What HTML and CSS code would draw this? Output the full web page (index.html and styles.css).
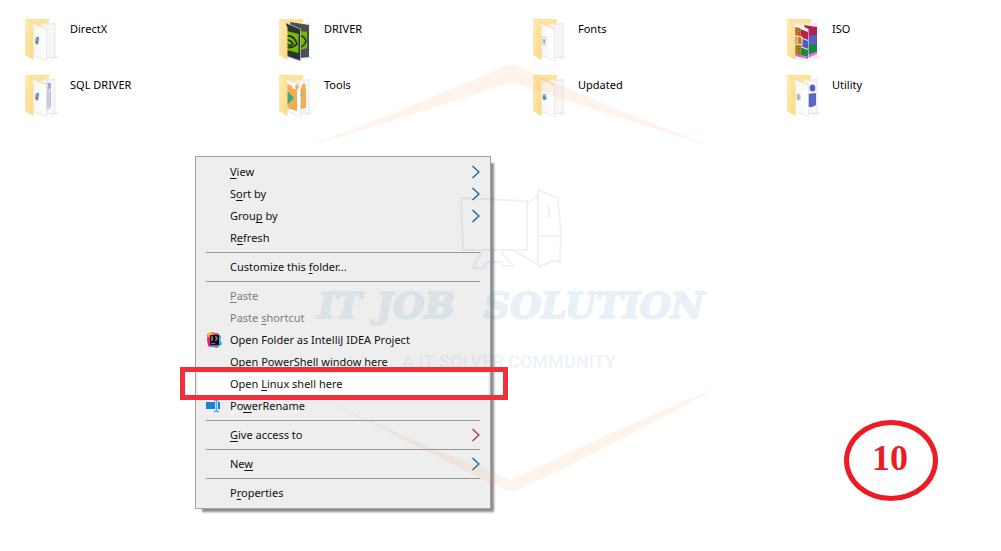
FILE: index.html
```html
<!DOCTYPE html>
<html lang="en">
<head>
<meta charset="utf-8">
<title>Folder context menu</title>
<link rel="stylesheet" href="styles.css">
</head>
<body>
<svg class="defs" aria-hidden="true">
  <defs>
    <linearGradient id="flap" x1="0" y1="0" x2="1" y2="1">
      <stop offset="0" stop-color="#ffecb4"/><stop offset="1" stop-color="#fbd884"/>
    </linearGradient>
    <linearGradient id="sheet" x1="0" y1="0" x2="1" y2="0">
      <stop offset="0" stop-color="#f6f6f6"/><stop offset="1" stop-color="#fefefe"/>
    </linearGradient>
    <linearGradient id="brains" x1="0" y1="0" x2="1" y2="1">
      <stop offset="0" stop-color="#ff9a1f"/><stop offset=".35" stop-color="#f8306d"/><stop offset=".65" stop-color="#1c8df0"/><stop offset="1" stop-color="#ff5f2e"/>
    </linearGradient>
    <g id="back">
      <path d="M31 39l5-1-4 2-9 3z" fill="#e6e6e6"/>
      <path d="M1 1h24v10L9 30z" fill="#fde29a"/>
      <path d="M9 6q10 2 10 0l12-1v34l-9 1z" fill="#f7f7f7"/>
      <path d="M21 7l10-1.500v33.500l-9 1" fill="none" stroke="#dedede" stroke-width=".7"/>
    </g>
    <g id="front">
      <path d="M8 5l14.500 6v31.500L8 37z" fill="url(#sheet)" stroke="#dcdcdc" stroke-width=".6"/>
      <path d="M8 5l12.500 4.500q2 .5 2 2.500" fill="none" stroke="#f6dc98" stroke-width=".9"/>
    </g>
    <path id="cover" d="M1 1l7 6q1.500 1 1.500 3v32L1 37z" fill="url(#flap)"/>
  </defs>
</svg>
<main class="explorer">
  <nav class="files" aria-label="Folders">
    <a class="file" href="#directx">
      <svg class="folder" viewBox="0 0 36 44"><use href="#back"/><use href="#front"/><path d="M11 21l3-2 1 3-1 5-2-1z" fill="#8a9aa5"/><path d="M12 19l3 0v3z" fill="#2f9ae0"/><path d="M11 24l2-1v3z" fill="#4d5d68"/><use href="#cover"/></svg>
      <span>DirectX</span></a>
    <a class="file" href="#driver">
      <svg class="folder" viewBox="0 0 36 44"><use href="#back"/><path d="M12 4l19 3v32l-9 1z" fill="#4b5055"/><path d="M22 13l7 1v16l-7 2z" fill="#76b900"/><path d="M23 18q3 0 5 5-2 5-5 6" fill="none" stroke="#26300f" stroke-width="1.500"/><path d="M8 5l14.500 6v32L8 38z" fill="#2f3336" stroke="#c9cdd0" stroke-width=".7"/><path d="M9 13l11.500 3v19L9 32z" fill="#76b900"/><path d="M9 18q7-1 10 8-5 5-10 3M9 22q4 0 6 4-3 3-6 0" fill="none" stroke="#202b0c" stroke-width="1.700"/><use href="#cover"/></svg>
      <span>DRIVER</span></a>
    <a class="file" href="#fonts">
      <svg class="folder" viewBox="0 0 36 44"><use href="#back"/><use href="#front"/><path d="M10 18l4 1v9l-4-1z" fill="#e8e9eb" stroke="#d0d3d7" stroke-width=".5"/><path d="M11 25l1-4 1 5" fill="none" stroke="#9ab2cb"/><path d="M12 22h1v2h-1z" fill="#d98c8c"/><use href="#cover"/></svg>
      <span>Fonts</span></a>
    <a class="file" href="#iso">
      <svg class="folder" viewBox="0 0 36 44"><use href="#back"/><path d="M18 7l13 2v8l-9 2z" fill="#ad2450"/><path d="M20 18l11-1v9l-9 2z" fill="#5660c4"/><path d="M20 27l11-1v8l-9 3z" fill="#18843d"/><path d="M20 37l11-3v2l-9 4z" fill="#e46fe0"/><path d="M8 5l14.500 6v31.500L8 38z" fill="#f4f4f6"/><path d="M9 9l13 5v8L9 17z" fill="#b9224d"/><path d="M9 18l13 5v8L9 26z" fill="#535bc0"/><path d="M9 27l13 5v7L9 36z" fill="#1b8a45"/><path d="M9 36l13 3v2L9 38z" fill="#ef5be8"/><path d="M10.500 9l4.500 2v27l-4.500-2z" fill="#c77b20"/><path d="M11 18l5 1v8l-5-1z" fill="none" stroke="#f4e3c4" stroke-width="1.200"/><path d="M13 10v8M13 28v9" stroke="#713e12" stroke-dasharray="1 1"/><use href="#cover"/></svg>
      <span>ISO</span></a>
    <a class="file" href="#sql">
      <svg class="folder" viewBox="0 0 36 44"><use href="#back"/><path d="M22 8l5 1v25l-5 3z" fill="#d5d7ea"/><path d="M24 9l3 0v5l-3 2z" fill="#a4a8d8"/><path d="M24 18v16M26.500 17v16" stroke="#b4b6ca"/><use href="#front"/><path d="M11 21l3-2 1 3-1 5-2-1z" fill="#8a9aa5"/><path d="M12 19l3 0v3z" fill="#2f9ae0"/><path d="M11 24l2-1v3z" fill="#4d5d68"/><use href="#cover"/></svg>
      <span>SQL DRIVER</span></a>
    <a class="file" href="#tools">
      <svg class="folder" viewBox="0 0 36 44"><use href="#back"/><path d="M22 14l2-1v-2l2-2 2 2-1 2 1 2v19l-6 1z" fill="#eeae55"/><path d="M22 19l2 2-2 2z" fill="#35a878"/><use href="#front"/><path d="M9 10l5 2 1 3 3 0-1-3 2-2 2 3-2 3v21L9 34z" fill="#f0ad51"/><path d="M9 17l7 7-7 7z" fill="#35ac80"/><use href="#cover"/></svg>
      <span>Tools</span></a>
    <a class="file" href="#updated">
      <svg class="folder" viewBox="0 0 36 44"><use href="#back"/><use href="#front"/><ellipse cx="12.500" cy="23" rx="2" ry="3" fill="#4f8fd0"/><path d="M11 22l2-1 1 2" fill="none" stroke="#b9dcf5" stroke-width=".8"/><use href="#cover"/></svg>
      <span>Updated</span></a>
    <a class="file" href="#utility">
      <svg class="folder" viewBox="0 0 36 44"><use href="#back"/><ellipse cx="26.500" cy="14" rx="2.800" ry="3.500" fill="#5660c4"/><path d="M22 20l7-1q1 0 1 1v11l-4 2-4 0z" fill="#5b64c8"/><use href="#front"/><ellipse cx="12.500" cy="23" rx="2.200" ry="3.500" fill="#c3cfcf"/><path d="M12 21l1 2-1 3" fill="none" stroke="#6fa98d"/><use href="#cover"/></svg>
      <span>Utility</span></a>
  </nav>

  <ul class="menu">
    <li><button class="item"><span><u>V</u>iew</span><svg class="arrow" viewBox="0 0 8 14"><path d="M.5 1l6.500 6-6.500 6"/></svg></button></li>
    <li><button class="item"><span>S<u>o</u>rt by</span><svg class="arrow" viewBox="0 0 8 14"><path d="M.5 1l6.500 6-6.500 6"/></svg></button></li>
    <li><button class="item"><span>Grou<u>p</u> by</span><svg class="arrow" viewBox="0 0 8 14"><path d="M.5 1l6.500 6-6.500 6"/></svg></button></li>
    <li><button class="item"><span>R<u>e</u>fresh</span></button></li>
    <li class="rule"></li>
    <li><button class="item"><span>Customize this <u>f</u>older...</span></button></li>
    <li class="rule"></li>
    <li><button class="item" disabled><span><u>P</u>aste</span></button></li>
    <li><button class="item" disabled><span>Paste <u>s</u>hortcut</span></button></li>
    <li><button class="item"><svg class="glyph" viewBox="0 0 16 16"><path d="M1 2l5-2 3 1 3 0 3 4-1 3 2 4-5 4-4-1-5-1 1-4-2-3z" fill="url(#brains)"/><path d="M1 2l5-2 1 3-4 2z" fill="#ffb431"/><path d="M11 1l4 4-1 3 2 4-3 2z" fill="#18b5ee"/><path d="M1 7l3-2 2 10-4-1z" fill="#e81f83"/><path d="M4 3h9v10H4z" fill="#170a12"/><path d="M5 5h2M6 5v3M5 8h2M9 5h2v2.500L10 8H9" fill="none" stroke="#ccc" stroke-width=".8"/><path d="M5 11.500h4" stroke="#998e96" stroke-width=".8"/></svg><span>Open Folder as IntelliJ IDEA Project</span></button></li>
    <li><button class="item"><span>Open PowerShell window here</span></button></li>
    <li><button class="item active"><span>Open <u>L</u>inux shell here</span></button></li>
    <li><button class="item"><svg class="glyph" viewBox="0 0 16 16"><path d="M0 4h9v7H0zM12 4h2v7h-2z" fill="#1683d8"/><path d="M8 2h5M8 13.500h5M10.500 2v11" stroke="#42b4ee" stroke-width="1.500"/></svg><span>Po<u>w</u>erRename</span></button></li>
    <li class="rule"></li>
    <li><button class="item"><span><u>G</u>ive access to</span><svg class="arrow warm" viewBox="0 0 8 14"><path d="M.5 1l6.500 6-6.500 6"/></svg></button></li>
    <li class="rule"></li>
    <li><button class="item"><span>Ne<u>w</u></span><svg class="arrow" viewBox="0 0 8 14"><path d="M.5 1l6.500 6-6.500 6"/></svg></button></li>
    <li class="rule"></li>
    <li><button class="item"><span>P<u>r</u>operties</span></button></li>
  </ul>

  <svg class="watermark" viewBox="300 60 420 440" role="img" aria-label="IT Job Solution, a IT solver community">
    <g class="roof">
      <path d="M306 147Q400 112 503 67q8-4 17 0 98 45 198 81-110-33-206-66-96 32-206 65z"/>
      <path d="M312 394Q400 436 511 480 612 431 718 387 620 442 520 489q-8 5-17 0Q410 443 312 394z"/>
    </g>
    <g class="computer">
      <path d="M461 198l66 3v49h-64zM527 204l11-9M513 250l25 15M538 190l20 8 3 36-1 28-7-1-5 2-10 4zM539 236h22M549 205v13M482 251l-9 17h10l4-6h13l3 4h10l-10-12 0-3"/>
    </g>
    <g class="brand"><text x="318" y="318">IT</text><text x="376" y="318">JOB</text><text x="484" y="318">SOLUTION</text></g>
    <text class="slogan" x="402" y="368">A IT SOLVER COMMUNITY</text>
  </svg>

  <div class="step">10</div>
</main>
</body>
</html>
```
FILE: styles.css
```css
* { box-sizing: border-box; }
body {
  margin: 0;
  background: #fff;
  color: #111;
  font: 11px/22px "Noto Sans", "Open Sans", sans-serif;
}
.defs { position: absolute; width: 0; height: 0; }
.explorer { position: relative; min-height: 100vh; overflow: hidden; }
.files {
  display: grid;
  grid-template-columns: repeat(3, 1fr) 190px;
  row-gap: 12px;
  padding: 18px 25px 0 24px;
}
.file {
  display: flex;
  gap: 10px;
  height: 44px;
  color: #000;
  text-decoration: none;
}
.folder { width: 36px; height: 44px; }

.menu {
  position: absolute;
  left: 195px;
  top: 156px;
  width: 296px;
  margin: 0;
  padding: 4px 2px;
  list-style: none;
  background: #eee;
  border: 1px solid #a2a2a2;
  box-shadow: 5px 5px 2px -2px rgba(0, 0, 0, .45);
}
.item {
  position: relative;
  display: flex;
  align-items: center;
  width: 100%;
  height: 22px;
  padding: 0 8px 0 32px;
  border: 0;
  background: transparent;
  color: #111;
  font: inherit;
  text-align: left;
}
.item:disabled { color: #7b7b7b; }
.item u { text-underline-offset: 2px; text-decoration-thickness: 1px; text-decoration-skip-ink: none; }
.glyph { position: absolute; left: 8px; top: 3px; width: 16px; height: 16px; }
.arrow { width: 8px; height: 14px; margin-left: auto; fill: none; stroke: #0f5a96; stroke-width: 1.2; }
.arrow.warm { stroke: #a82c3c; }
.rule { height: 7px; padding: 3px 8px; }
.rule::before { content: ""; display: block; height: 1px; background: #969696; }
.active { background: #fff; z-index: 1; }
.active::after {
  content: "";
  position: absolute;
  inset: -6px -20px -5px -18px;
  border: 5px solid #f02f38;
}

.watermark { position: absolute; z-index: 2; left: 300px; top: 60px; width: 420px; height: 440px; pointer-events: none; }
.roof { fill: rgba(255, 150, 60, .1); }
.computer { fill: none; stroke: rgba(70, 130, 180, .1); stroke-width: 2; }
.brand {
  fill: #3f93c5;
  stroke: #3f93c5;
  stroke-width: 2;
  opacity: .12;
  font: italic bold 36px "DejaVu Serif", serif;
}
.slogan { fill: rgba(63, 147, 197, .1); font: bold 18px Roboto, sans-serif; }

.step {
  position: absolute;
  left: 844px;
  top: 420px;
  width: 94px;
  height: 81px;
  padding-right: 2px;
  border: 5px solid #ed1c24;
  border-radius: 50%;
  color: #ed1c24;
  font: bold 36px/66px "Liberation Serif", serif;
  text-align: center;
}
```
